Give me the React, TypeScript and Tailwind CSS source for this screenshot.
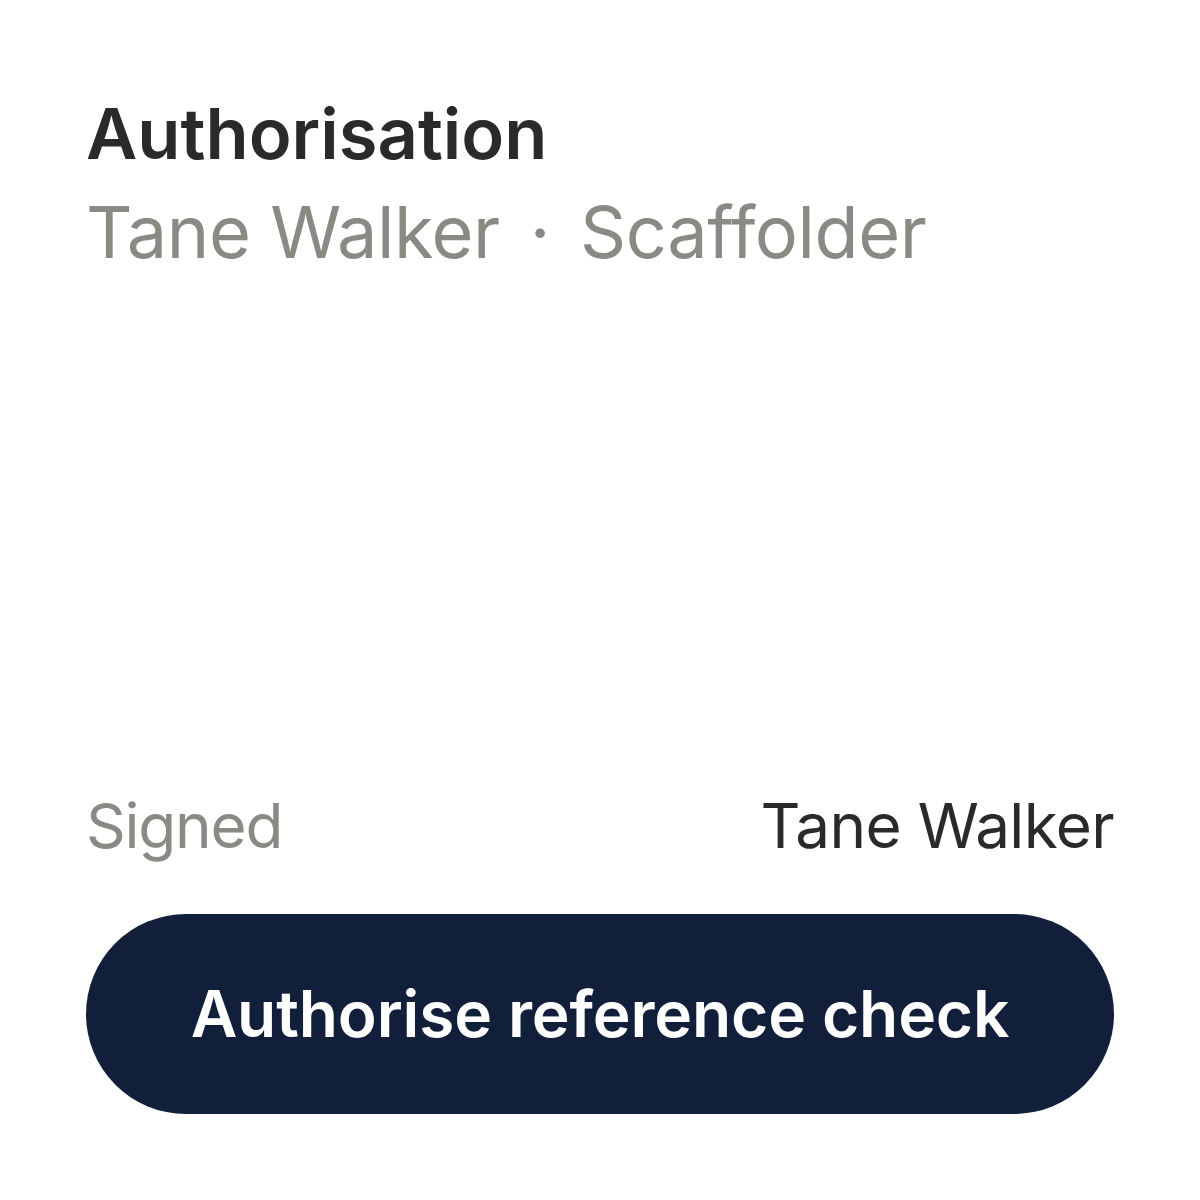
import React from "react";

export default function App() {
  return (
    <div
      className="w-[1200px] h-[1200px] bg-white flex flex-col px-[86px] pt-[92px] pb-[86px]"
      style={{ fontFamily: "Inter, 'Noto Sans', sans-serif" }}
    >
      <div className="flex flex-col">
        <h1 className="text-[70.5px] leading-[84px] font-semibold text-[#2a2a2a]">
          Authorisation
        </h1>
        <p className="mt-[13px] flex items-baseline gap-[30px] text-[72px] leading-[86px] text-[#8a8a84] tracking-[-0.006em]">
          <span>Tane Walker</span>
          <span>·</span>
          <span>Scaffolder</span>
        </p>
      </div>
      <div className="mt-auto flex flex-col">
        <div className="flex items-baseline justify-between text-[62px] leading-[74px] tracking-[-0.01em]">
          <span className="text-[#8a8a84] tracking-[-0.02em]">Signed</span>
          <span className="text-[#2a2a2a]">Tane Walker</span>
        </div>
        <button className="mt-[51px] h-[200px] w-full rounded-full bg-[#111f3a] text-white text-[64px] font-semibold tracking-[-0.002em]">
          Authorise reference check
        </button>
      </div>
    </div>
  );
}
